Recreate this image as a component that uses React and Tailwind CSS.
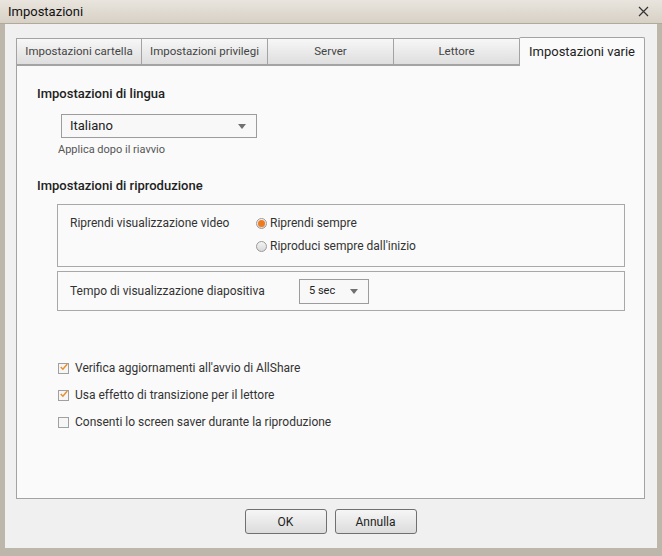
import { useState } from "react";

const font = { fontFamily: "Roboto, 'Noto Sans', sans-serif" };

function Tab({ label, active, first }) {
    if (active) {
        return (
            <div className="w-[126px] h-[29px] -mb-px z-10 flex items-center justify-center bg-[#fafafa] border border-b-0 border-[#a3a3a3] rounded-t-[2px] text-[13px] text-[#222]">
                {label}
            </div>
        );
    }
    return (
        <div
            className={`${first ? "w-[125px]" : "w-[126px]"} h-[27px] mt-[2px] pt-[1px] flex items-center justify-center bg-gradient-to-b from-[#f7f7f7] to-[#dedede] border-l border-t border-b border-[#a3a3a3] text-[11.5px] text-[#444]`}
        >
            {label}
        </div>
    );
}

function Arrow() {
    return (
        <svg width="8" height="5" viewBox="0 0 8 5">
            <path d="M0 0 L8 0 L4 5 Z" fill="#707070" />
        </svg>
    );
}

function Radio({ checked, label, onClick }) {
    return (
        <div className="flex items-center h-[20px] cursor-default" onClick={onClick}>
            <div className="w-[11px] h-[11px] rounded-full border border-[#9a9a9a] bg-gradient-to-b from-[#f4f4f4] to-[#d8d8d8] flex items-center justify-center">
                {checked && <div className="w-[7px] h-[7px] rounded-full bg-[#f07a1e]"></div>}
            </div>
            <span className="ml-[3px] text-[12px] text-[#333]">{label}</span>
        </div>
    );
}

function Check({ checked, label, onClick }) {
    return (
        <div className="flex items-center h-[18px] cursor-default" onClick={onClick}>
            <div className="w-[11px] h-[11px] border border-[#a0a0a0] bg-[#f6f6f6] flex items-center justify-center">
                {checked && (
                    <svg width="11" height="10" viewBox="0 0 11 10" className="-mt-[2px] ml-[1px]">
                        <path d="M1 5 L4 8 L10 1" fill="none" stroke="#e8902a" strokeWidth="2" />
                    </svg>
                )}
            </div>
            <span className="ml-[6px] text-[12px] text-[#333]">{label}</span>
        </div>
    );
}

function App() {
    const [resume, setResume] = useState(0);
    const [checks, setChecks] = useState([true, true, false]);
    const checkLabels = [
        "Verifica aggiornamenti all'avvio di AllShare",
        "Usa effetto di transizione per il lettore",
        "Consenti lo screen saver durante la riproduzione",
    ];

    return (
        <div className="w-[662px] h-[556px] bg-[#bdb6ab] flex flex-col" style={font}>
            <div className="h-[24px] flex items-center justify-between px-[8px] bg-gradient-to-b from-[#e9e5de] to-[#d7d0c5] border-b border-[#b1a99c]">
                <span className="text-[13px] text-[#111]">Impostazioni</span>
                <svg width="11" height="11" viewBox="0 0 11 11" className="mr-[5px]">
                    <path d="M1 1 L10 10 M10 1 L1 10" stroke="#333" strokeWidth="1.2" />
                </svg>
            </div>
            <div className="mx-[5px] h-[524px] bg-[#f0f0f0] flex flex-col pt-[12px] pl-[11px] pr-[12px]">
                <div className="flex items-end h-[29px]">
                    <Tab label="Impostazioni cartella" first />
                    <Tab label="Impostazioni privilegi" />
                    <Tab label="Server" />
                    <Tab label="Lettore" />
                    <Tab label="Impostazioni varie" active />
                </div>
                <div className="h-[434px] bg-[#fafafa] border border-[#a3a3a3] pl-[20px] pt-[19px]">
                    <div className="text-[13px] font-medium text-[#222] leading-[18px]">Impostazioni di lingua</div>
                    <div className="ml-[24px] mt-[11px] w-[196px] h-[24px] border border-[#9c9c9c] bg-[#f8f8f8] flex items-center justify-between pl-[8px] pr-[10px]">
                        <span className="text-[13px] text-[#222]">Italiano</span>
                        <Arrow />
                    </div>
                    <div className="ml-[21px] mt-[4px] text-[11px] text-[#555] leading-[16px]">Applica dopo il riavvio</div>
                    <div className="mt-[19px] text-[13px] font-medium text-[#222] leading-[18px]">Impostazioni di riproduzione</div>
                    <div className="ml-[20px] mt-[9px] w-[568px] h-[63px] border border-[#a8a8a8] flex pl-[12px] pt-[8px]">
                        <div className="w-[186px] h-[20px] flex items-center text-[12px] text-[#333]">Riprendi visualizzazione video</div>
                        <div className="flex flex-col gap-[3px]">
                            <Radio checked={resume === 0} label="Riprendi sempre" onClick={() => setResume(0)} />
                            <Radio checked={resume === 1} label="Riproduci sempre dall'inizio" onClick={() => setResume(1)} />
                        </div>
                    </div>
                    <div className="ml-[20px] mt-[4px] w-[568px] h-[40px] border border-[#a8a8a8] flex items-center pl-[12px]">
                        <div className="w-[229px] text-[12px] text-[#333]">Tempo di visualizzazione diapositiva</div>
                        <div className="w-[70px] h-[25px] border border-[#9c9c9c] bg-[#f8f8f8] flex items-center justify-between pl-[9px] pr-[10px]">
                            <span className="text-[11px] text-[#222]">5 sec</span>
                            <Arrow />
                        </div>
                    </div>
                    <div className="ml-[21px] mt-[48px] flex flex-col gap-[9px]">
                        {checkLabels.map((l, i) => (
                            <Check
                                key={l}
                                label={l}
                                checked={checks[i]}
                                onClick={() => setChecks(checks.map((c, j) => (j === i ? !c : c)))}
                            />
                        ))}
                    </div>
                </div>
                <div className="flex justify-center gap-[8px] mt-[10px]">
                    <button className="w-[82px] h-[25px] rounded-[3px] border border-[#707070] bg-gradient-to-b from-[#f6f6f6] to-[#dcdcdc] text-[12px] text-[#222]">
                        OK
                    </button>
                    <button className="w-[82px] h-[25px] rounded-[3px] border border-[#707070] bg-gradient-to-b from-[#f6f6f6] to-[#dcdcdc] text-[12px] text-[#222]">
                        Annulla
                    </button>
                </div>
            </div>
        </div>
    );
}

export default App;
